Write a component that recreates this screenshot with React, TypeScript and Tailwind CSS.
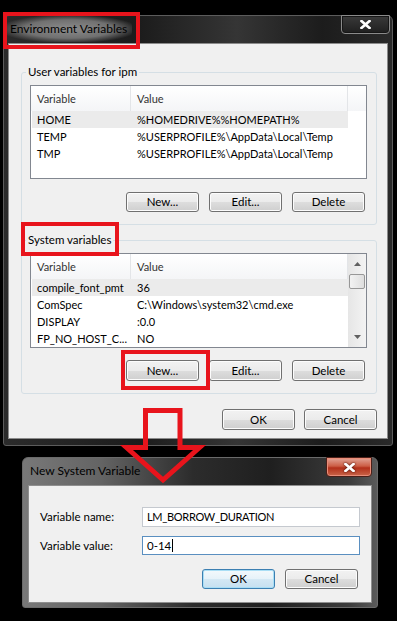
import React from 'react';

type Row = [string, string];

const USER_ROWS: Row[] = [
  ['HOME', '%HOMEDRIVE%%HOMEPATH%'],
  ['TEMP', '%USERPROFILE%\\AppData\\Local\\Temp'],
  ['TMP', '%USERPROFILE%\\AppData\\Local\\Temp'],
];

const SYSTEM_ROWS: Row[] = [
  ['compile_font_pmt', '36'],
  ['ComSpec', 'C:\\Windows\\system32\\cmd.exe'],
  ['DISPLAY', ':0.0'],
  ['FP_NO_HOST_C...', 'NO'],
];

function Button({ label, focused, tall }: { label: string; focused?: boolean; tall?: boolean }) {
  return (
    <div
      className={`flex w-[73px] items-center justify-center rounded-[3px] border text-[11.5px] leading-[16px] text-black ${
        tall ? 'h-[21px]' : 'h-[20px]'
      } ${
        focused
          ? 'border-[#3c7fb1] bg-[linear-gradient(to_bottom,#f3f9fc_0%,#e6f2f9_50%,#d4e8f4_51%,#c6e0f0_100%)] shadow-[inset_0_0_0_1px_#a9def5]'
          : 'border-[#707070] bg-[linear-gradient(to_bottom,#f2f2f2_0%,#ebebeb_50%,#dddddd_51%,#cfcfcf_100%)] shadow-[inset_0_0_0_1px_#fcfcfc]'
      }`}
    >
      {label}
    </div>
  );
}

function Arrow({ up }: { up?: boolean }) {
  return (
    <svg width="7" height="4" viewBox="0 0 7 4">
      <polygon points={up ? '3.5,0 7,4 0,4' : '0,0 7,0 3.5,4'} fill="#606060" />
    </svg>
  );
}

function ListView({ rows, scroll, heightClass }: { rows: Row[]; scroll?: boolean; heightClass: string }) {
  return (
    <div className={`flex w-[337px] border border-[#828790] bg-white ${heightClass}`}>
      <div className="flex w-[317px] flex-col">
        {/* header */}
        <div className="flex h-[25px] shrink-0 bg-[linear-gradient(to_bottom,#ffffff,#f4f5f7)] text-[11px] leading-[16px] text-[#333]">
          <div className="flex w-[100px] items-center border-r border-[#e3e5e8] pl-[6px]">Variable</div>
          <div className="flex flex-1 items-center border-r border-[#e3e5e8] pl-[6px]">Value</div>
        </div>
        {rows.map(([name, value], i) => (
          <div
            key={name}
            className={`ml-[1px] flex h-[17px] shrink-0 items-center text-[11px] leading-[16px] text-black ${
              i === 0 ? 'bg-[#ebebeb]' : ''
            }`}
          >
            <div className="w-[99px] whitespace-nowrap pl-[5px]">{name}</div>
            <div className="flex-1 whitespace-nowrap pl-[6px]">{value}</div>
          </div>
        ))}
      </div>
      {scroll ? (
        <div className="flex w-[18px] flex-col items-center bg-[linear-gradient(to_right,#e6e6e6,#f3f3f3)]">
          <div className="flex h-[20px] items-center justify-center">
            <Arrow up />
          </div>
          <div className="h-[15px] w-[16px] rounded-[2px] border border-[#979797] bg-[linear-gradient(to_right,#f2f2f2,#dedede)]" />
          <div className="flex-1" />
          <div className="flex h-[20px] items-center justify-center">
            <Arrow />
          </div>
        </div>
      ) : (
        <div className="w-[18px]">
          <div className="h-[25px] bg-[linear-gradient(to_bottom,#ffffff,#f4f5f7)]" />
        </div>
      )}
    </div>
  );
}

function CloseX({ className }: { className: string }) {
  return (
    <svg width="11" height="9" viewBox="0 0 11 9" className={className}>
      <path d="M1.5 1 L9.5 8 M9.5 1 L1.5 8" stroke="#ffffff" strokeWidth="2.6" strokeLinecap="square" />
    </svg>
  );
}

export default function App() {
  return (
    <div className="relative h-[621px] w-[397px] overflow-hidden bg-black [font-family:'Lato',sans-serif]">
      {/* Environment Variables window */}
      <div className="ml-[3px] mt-[15px] w-[390px] rounded-t-[6px] rounded-b-[3px] border border-[#5c5c5c] bg-[linear-gradient(to_right,#2b2b2b,#1c1c1c_35%,#353535_60%,#1c1c1c_82%,#2a2a2a)] px-[4px] pb-[6px]">
        <div className="flex h-[27px] items-start justify-between">
          <div className="-ml-[3px] rounded-[10px] bg-[radial-gradient(ellipse_at_center,#8c8c8c_0%,#707070_50%,rgba(60,60,60,0)_78%)] px-[5px] py-[5px] text-[12px] leading-[16px] text-black">
            Environment Variables
          </div>
          <div className="-mr-[2px] -mt-[1px] flex h-[19px] w-[49px] items-center justify-center rounded-b-[4px] border border-[#8a8a8a] bg-[linear-gradient(to_bottom,#3a3a3a,#1f1f1f)] shadow-[inset_0_0_0_1px_#151515]">
            <CloseX className="" />
          </div>
        </div>

        <div className="border border-[#8b8b8b] bg-[#f0f0f0] pb-[8px]">
          {/* User variables */}
          <div className="ml-[12px] mt-[28px] w-[356px] rounded-[3px] border border-[#d5dfe5] pb-[12px] pl-[8px] pr-[9px]">
            <div className="-ml-[4px] -mt-[9px] w-fit bg-[#f0f0f0] px-[2px] text-[11.5px] leading-[16px] text-black">
              User variables for ipm
            </div>
            <div className="mt-[5px]">
              <ListView rows={USER_ROWS} heightClass="h-[94px]" />
            </div>
            <div className="mt-[13px] flex justify-end gap-[10px] pr-[2px]">
              <Button label="New..." />
              <Button label="Edit..." />
              <Button label="Delete" />
            </div>
          </div>

          {/* System variables */}
          <div className="ml-[12px] mt-[15px] w-[356px] rounded-[3px] border border-[#d5dfe5] pb-[12px] pl-[8px] pr-[9px]">
            <div className="-ml-[4px] -mt-[9px] w-fit bg-[#f0f0f0] px-[2px] text-[11.5px] leading-[16px] text-black">
              System variables
            </div>
            <div className="mt-[5px]">
              <ListView rows={SYSTEM_ROWS} scroll heightClass="h-[95px]" />
            </div>
            <div className="mt-[12px] flex justify-end gap-[10px] pr-[2px]">
              <Button label="New..." tall />
              <Button label="Edit..." tall />
              <Button label="Delete" tall />
            </div>
          </div>

          <div className="mt-[15px] flex justify-end gap-[9px] pr-[10px]">
            <Button label="OK" tall />
            <Button label="Cancel" tall />
          </div>
        </div>
      </div>

      {/* New System Variable dialog */}
      <div className="ml-[22px] mt-[11px] w-[356px] rounded-t-[6px] rounded-b-[3px] border border-[#6a6a6a] bg-[linear-gradient(to_right,#787878,#646464_22%,#2c2c2c_48%,#1f1f1f_70%,#3c3c3c_92%,#5a5a5a)] px-[5px] pb-[4px]">
        <div className="flex h-[27px] items-start justify-between">
          <div className="ml-[2px] mt-[5px] text-[12px] leading-[16px] text-black">New System Variable</div>
          <div className="-mt-[1px] flex h-[20px] w-[46px] items-center justify-center rounded-b-[4px] border border-[#4a1f18] bg-[linear-gradient(to_bottom,#e2a597,#cc5e45_45%,#b3301a_55%,#c9664a)] shadow-[inset_0_0_0_1px_#e88c78]">
            <CloseX className="drop-shadow-[0_0_1px_#3a0a00]" />
          </div>
        </div>

        <div className="border border-[#8f8f8f] bg-[#f0f0f0] pb-[13px] pt-[21px]">
          <div className="flex h-[20px] items-center">
            <div className="w-[113px] pl-[11px] text-[11.5px] leading-[16px] text-black">Variable name:</div>
            <div className="flex h-[20px] w-[218px] items-center border border-[#c5c9cf] bg-white pl-[4px] text-[11px] leading-[16px] tracking-[-0.3px] text-black">
              LM_BORROW_DURATION
            </div>
          </div>
          <div className="mt-[9px] flex h-[19px] items-center">
            <div className="w-[113px] pl-[11px] text-[11.5px] leading-[16px] text-black">Variable value:</div>
            <div className="flex h-[19px] w-[218px] items-center border border-[#5a8fc0] bg-white pl-[4px] text-[11.5px] leading-[16px] text-black">
              0-14
              <span className="ml-[1px] h-[13px] w-[1px] bg-black" />
            </div>
          </div>
          <div className="mt-[14px] flex justify-end gap-[10px] pr-[13px]">
            <Button label="OK" focused />
            <Button label="Cancel" />
          </div>
        </div>
      </div>

      {/* annotation overlays */}
      <div className="absolute left-[3px] top-[12px] h-[37px] w-[137px] border-[4px] border-[#e8141c]" />
      <div className="absolute left-[21px] top-[222px] h-[34px] w-[98px] border-[4px] border-[#e8141c]" />
      <div className="absolute left-[121px] top-[350px] h-[40px] w-[89px] border-[4px] border-[#e8141c]" />
      <svg className="pointer-events-none absolute left-0 top-0" width="397" height="621" viewBox="0 0 397 621">
        <polygon
          points="145.5,410.5 180,410.5 180,447.5 199.5,447.5 163,480 126.5,447.5 145.5,447.5"
          fill="none"
          stroke="#e8141c"
          strokeWidth="5"
          strokeLinejoin="miter"
        />
      </svg>
    </div>
  );
}
